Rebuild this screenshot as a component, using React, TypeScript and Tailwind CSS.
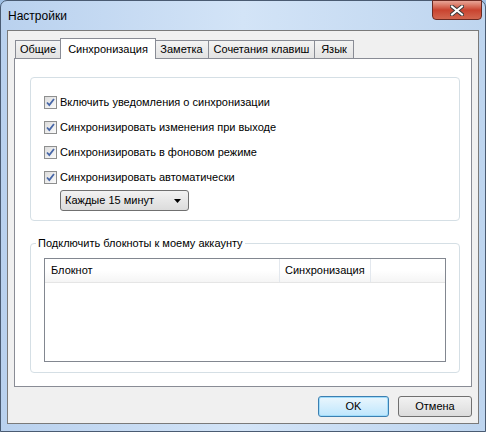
import React from "react";

const font = { fontFamily: '"Liberation Sans", Arial, sans-serif' };

function Check({ label, h = "h-[25px]" }: { label: string; h?: string }) {
  return (
    <div className={`flex items-center ${h}`}>
      <span className="w-[13px] h-[13px] border border-[#8e8f8f] bg-gradient-to-br from-[#dcdcdc] to-[#fbfbfb] flex items-center justify-center">
        <svg width="11" height="11" viewBox="0 0 11 11">
          <path d="M2 5.5 L4.3 8 L9 2" fill="none" stroke="#4767a8" strokeWidth="1.8" />
        </svg>
      </span>
      <span className="ml-[3px] text-[11px] text-black">{label}</span>
    </div>
  );
}

function Tab({ label, w, active }: { label: string; w: string; active?: boolean }) {
  if (active) {
    return (
      <div className={`${w} h-[21px] -mb-px -mx-[1px] z-10 border border-b-0 border-[#898c95] bg-white flex items-start justify-center pt-[2px] text-[11px] text-black`}>
        {label}
      </div>
    );
  }
  return (
    <div className={`${w} h-[18px] -ml-px border border-b-0 border-[#898c95] bg-gradient-to-b from-[#f3f3f3] to-[#e3e3e3] flex items-center justify-center text-[11px] text-black`}>
      {label}
    </div>
  );
}

export default function App() {
  return (
    <div style={font} className="w-[486px] h-[432px] overflow-hidden bg-[#9fbfe4] relative">
      <div className="w-full h-full border border-[#4a5b72] rounded-t-[7px] bg-gradient-to-r from-[#b9d1ee] via-[#d3e4f7] to-[#bed5ef] flex flex-col">
        {/* title bar */}
        <div className="h-[29px] flex items-center pl-[7px] relative">
          <span className="text-[12px] text-black">Настройки</span>
          <div className="absolute right-[3px] top-[-1px] w-[50px] h-[20px] rounded-b-[4px] border border-[#6b2a22] bg-gradient-to-b from-[#e7a597] via-[#c9432f] to-[#d2664f] flex items-center justify-center">
            <svg width="14" height="11" viewBox="0 0 14 11">
              <path d="M2 1.5 L12 9.5 M12 1.5 L2 9.5" stroke="#3a3a3a" strokeWidth="4" strokeLinecap="square" />
              <path d="M2 1.5 L12 9.5 M12 1.5 L2 9.5" stroke="#ffffff" strokeWidth="2" strokeLinecap="square" />
            </svg>
          </div>
        </div>
        {/* client */}
        <div className="mx-[6px] h-[394px] border border-[#7a7a7a] bg-[#f0f0f0] flex flex-col px-[6px] pt-[7px]">
          <div className="flex items-end h-[20px] pl-[2px]">
            <Tab label="Общие" w="w-[46px]" />
            <Tab label="Синхронизация" w="w-[96px]" active />
            <Tab label="Заметка" w="w-[55px]" />
            <Tab label="Сочетания клавиш" w="w-[107px]" />
            <Tab label="Язык" w="w-[40px]" />
          </div>
          <div className="h-[329px] border border-[#898c95] bg-white pl-[15px] pr-[11px] pt-[18px]">
            <div className="h-[144px] border border-[#d5dfe5] rounded-[4px] pl-[13px] pt-[12px]">
              <Check label="Включить уведомления о синхронизации" />
              <Check label="Синхронизировать изменения при выходе" />
              <Check label="Синхронизировать в фоновом режиме" />
              <Check label="Синхронизировать автоматически" h="h-[24px]" />
              <div className="ml-[16px] mt-[1px] w-[129px] h-[21px] border border-[#707070] rounded-[3px] bg-gradient-to-b from-[#f2f2f2] to-[#dcdcdc] flex items-center justify-between pl-[4px] pr-[7px]">
                <span className="text-[11px] text-black">Каждые 15 минут</span>
                <svg width="7" height="4" viewBox="0 0 7 4">
                  <path d="M0 0 L7 0 L3.5 4 Z" fill="#000" />
                </svg>
              </div>
            </div>
            <div className="mt-[22px] h-[130px] border border-[#d5dfe5] rounded-[4px] relative px-[13px] pt-[14px]">
              <span className="absolute left-[5px] top-[-9px] bg-white px-[2px] text-[11px] text-black">
                Подключить блокноты к моему аккаунту
              </span>
              <div className="h-[104px] border border-[#828790] bg-white">
                <div className="h-[24px] flex border-b border-[#e5e5e5] bg-gradient-to-b from-white from-50% to-[#f5f5f5] text-[11px] text-black">
                  <div className="w-[235px] border-r border-[#e3e8ee] flex items-center pl-[6px]">Блокнот</div>
                  <div className="w-[91px] border-r border-[#e3e8ee] flex items-center pl-[5px]">Синхронизация</div>
                </div>
              </div>
            </div>
          </div>
          <div className="flex justify-end gap-[9px] mt-[9px]">
            <button className="w-[71px] h-[21px] rounded-[3px] border border-[#3c7fb1] bg-gradient-to-b from-[#eaf6fd] to-[#bee6fd] shadow-[inset_0_0_0_1px_#9fdcfb] text-[11px] text-black">
              OK
            </button>
            <button className="w-[74px] h-[21px] rounded-[3px] border border-[#707070] bg-gradient-to-b from-[#f2f2f2] to-[#dcdcdc] text-[11px] text-black">
              Отмена
            </button>
          </div>
        </div>
      </div>
    </div>
  );
}
